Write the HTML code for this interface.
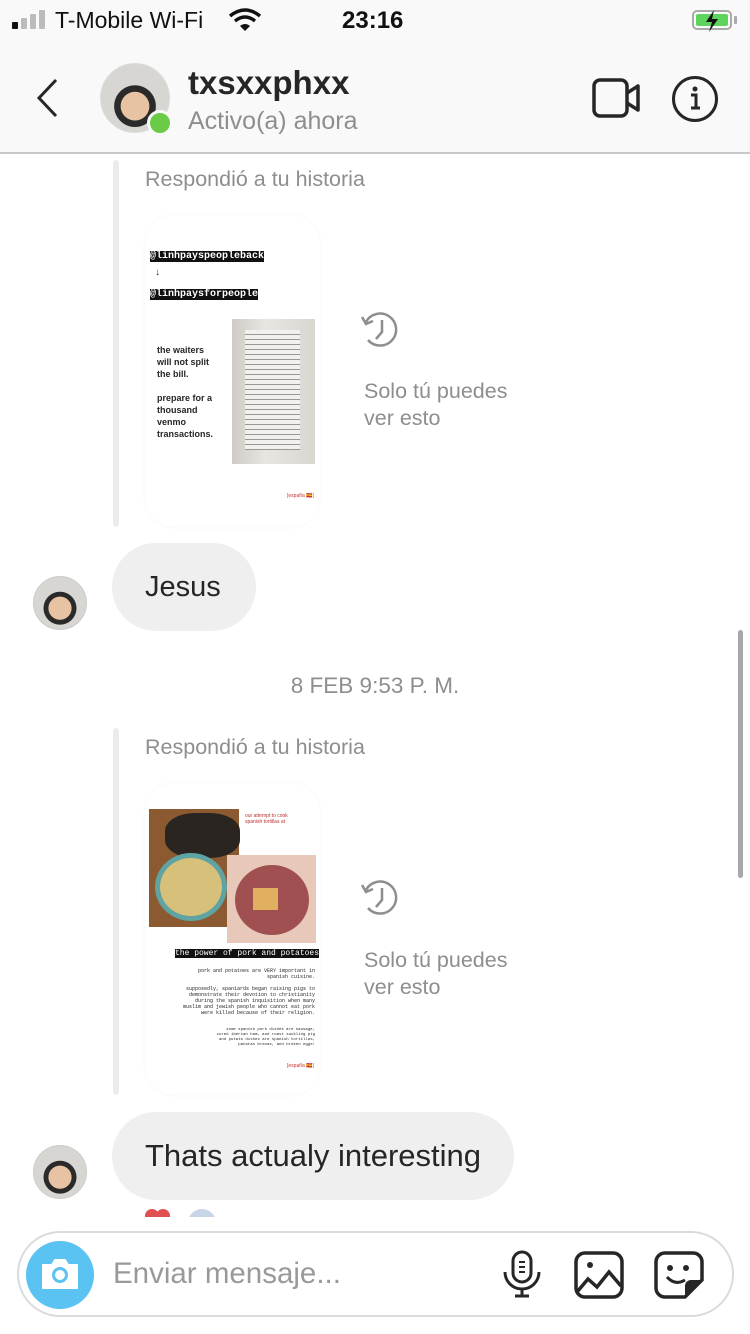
<!DOCTYPE html>
<html><head><meta charset="utf-8"><style>
*{margin:0;padding:0;box-sizing:border-box}
body{width:750px;height:1334px;position:relative;background:#fff;font-family:"Liberation Sans",sans-serif;overflow:hidden;color:#262626}
.abs{position:absolute}
.hdr{left:0;top:0;width:750px;height:154px;background:#f9f9f9;border-bottom:2px solid #c8c8c8}
.vline{width:6px;background:#ececec;border-radius:3px}
.card{background:#fff;border-radius:30px;box-shadow:0 0 4px rgba(0,0,0,0.04);overflow:hidden}
.gray{color:#8e8e8e}
.bubble{background:#efefef;border-radius:44px;height:88px;font-size:29px;line-height:88px;padding:0 33px}
.av{width:54px;height:54px;border-radius:50%;background:radial-gradient(circle at 50% 60%,#e7c2a3 0 28%,#2a2a2a 29% 40%,#d8d6d2 41%);border:1px solid #ccc}
.mono{font-family:"Liberation Mono",monospace}
</style></head><body>
<div class="abs hdr"></div>
<!-- status bar -->
<div class="abs" style="left:12px;top:22px;width:6px;height:7px;background:#111;border-radius:1px"></div>
<div class="abs" style="left:21px;top:18px;width:6px;height:11px;background:#bbb;border-radius:1px"></div>
<div class="abs" style="left:30px;top:14px;width:6px;height:15px;background:#bbb;border-radius:1px"></div>
<div class="abs" style="left:39px;top:10px;width:6px;height:19px;background:#bbb;border-radius:1px"></div>
<div class="abs" style="left:55px;top:7px;font-size:23px;color:#111">T-Mobile Wi-Fi</div>
<svg class="abs" style="left:228px;top:8px" width="34" height="24" viewBox="0 0 34 24"><path d="M2 8 Q17 -4 32 8" stroke="#111" stroke-width="3.5" fill="none"/><path d="M7 13 Q17 5 27 13" stroke="#111" stroke-width="3.5" fill="none"/><path d="M12 18 Q17 14 22 18 L17 23Z" fill="#111"/></svg>
<div class="abs" style="left:342px;top:7px;font-size:24px;font-weight:bold;color:#111">23:16</div>
<div class="abs" style="left:692px;top:10px;width:40px;height:20px;border:2px solid #aaa;border-radius:5px;padding:2px"><div style="width:100%;height:100%;background:#5fd45d;border-radius:2px"></div></div>
<div class="abs" style="left:734px;top:16px;width:3px;height:8px;background:#aaa;border-radius:1px"></div>
<svg class="abs" style="left:704px;top:10px" width="16" height="22"><path d="M10 0 L2 12 H8 L5 22 L14 9 H8Z" fill="#111"/></svg>
<!-- header -->
<svg class="abs" style="left:34px;top:78px" width="26" height="40"><path d="M22 2 L5 20 L22 38" stroke="#262626" stroke-width="3" fill="none"/></svg>
<div class="abs" style="left:100px;top:63px;width:70px;height:70px;border-radius:50%;background:radial-gradient(circle at 50% 62%,#e7c2a3 0 26%,#2a2a2a 27% 38%,#d8d6d2 39%);border:1px solid #ddd"></div>
<div class="abs" style="left:147px;top:110px;width:26px;height:26px;border-radius:50%;background:#6bcb46;border:3px solid #f9f9f9"></div>
<div class="abs" style="left:188px;top:64px;font-size:33px;font-weight:bold;color:#262626">txsxxphxx</div>
<div class="abs gray" style="left:188px;top:107px;font-size:25px">Activo(a) ahora</div>
<svg class="abs" style="left:591px;top:77px" width="52" height="42"><rect x="3" y="3" width="33" height="36" rx="6" stroke="#262626" stroke-width="3.5" fill="none"/><path d="M36 16 L47 9 V33 L36 26" stroke="#262626" stroke-width="3.5" fill="none" stroke-linejoin="round"/></svg>
<svg class="abs" style="left:671px;top:75px" width="48" height="48"><circle cx="24" cy="24" r="21.5" stroke="#262626" stroke-width="3" fill="none"/><circle cx="24" cy="14" r="2.5" fill="#262626"/><path d="M20 20 H25 V33 M20 33 H29" stroke="#262626" stroke-width="3" fill="none"/></svg>
<!-- first story -->
<div class="abs vline" style="left:113px;top:160px;height:367px"></div>
<div class="abs gray" style="left:145px;top:167px;font-size:21.5px">Respondió a tu historia</div>
<div class="abs card" style="left:145px;top:215px;width:175px;height:312px">
 <div class="abs mono" style="left:5px;top:36px;font-size:10px;background:#111;color:#fff;font-weight:bold">@linhpayspeopleback</div>
 <div class="abs" style="left:10px;top:52px;font-size:10px">↓</div>
 <div class="abs mono" style="left:5px;top:74px;font-size:10px;background:#111;color:#fff;font-weight:bold">@linhpaysforpeople</div>
 <div class="abs" style="left:12px;top:129px;font-size:9px;font-weight:bold;line-height:12px">the waiters<br>will not split<br>the bill.<br><br>prepare for a<br>thousand<br>venmo<br>transactions.</div>
 <div class="abs" style="left:87px;top:104px;width:83px;height:145px;background:linear-gradient(90deg,#cfcbc5,#e8e6e2 40%,#d9d6d0);"></div>
 <div class="abs" style="left:100px;top:115px;width:55px;height:120px;background:repeating-linear-gradient(#f1f0ee 0 4px,#9a9894 4px 5px)"></div>
 <div class="abs" style="left:142px;top:278px;font-size:5px;color:#c33">[españa 🇪🇸]</div>
</div>
<svg class="abs" style="left:360px;top:310px" width="44" height="42"><path d="M6 12 A16 16 0 1 1 8 30" stroke="#8e8e8e" stroke-width="2.5" fill="none"/><path d="M2 7 L6 14 L13 11" stroke="#8e8e8e" stroke-width="2.5" fill="none"/><path d="M22 10 V22 L16 29" stroke="#8e8e8e" stroke-width="2.5" fill="none"/></svg>
<div class="abs gray" style="left:364px;top:378px;font-size:21.5px;line-height:27px">Solo tú puedes<br>ver esto</div>
<div class="abs av" style="left:33px;top:576px"></div>
<div class="abs bubble" style="left:112px;top:543px;width:144px">Jesus</div>
<div class="abs gray" style="left:0;width:750px;top:673px;text-align:center;font-size:22.5px">8 FEB 9:53 P. M.</div>
<!-- second story -->
<div class="abs vline" style="left:113px;top:728px;height:367px"></div>
<div class="abs gray" style="left:145px;top:735px;font-size:21.5px">Respondió a tu historia</div>
<div class="abs card" style="left:145px;top:783px;width:175px;height:312px">
 <div class="abs" style="left:4px;top:26px;width:90px;height:118px;background:#8b5a30"></div>
 <div class="abs" style="left:20px;top:30px;width:75px;height:45px;border-radius:40%;background:#2a2520"></div>
 <div class="abs" style="left:10px;top:70px;width:72px;height:68px;border-radius:50%;background:#d6c07a;border:5px solid #5fa3a3"></div>
 <div class="abs" style="left:82px;top:72px;width:89px;height:88px;background:#e8c8b8"></div>
 <div class="abs" style="left:90px;top:82px;width:74px;height:70px;border-radius:50%;background:#a05050"></div>
 <div class="abs" style="left:108px;top:105px;width:25px;height:22px;background:#e0b060"></div>
 <div class="abs" style="left:100px;top:30px;font-size:5px;color:#b33;line-height:6px">our attempt to cook<br>spanish tortillas at</div>
 <div class="abs mono" style="left:30px;top:166px;font-size:8px;background:#111;color:#fff">the power of pork and potatoes</div>
 <div class="abs mono" style="left:20px;top:185px;font-size:5px;line-height:6px;text-align:right;width:150px">pork and potatoes are VERY important in<br>spanish cuisine.<br><br>supposedly, spaniards began raising pigs to<br>demonstrate their devotion to christianity<br>during the spanish inquisition when many<br>muslim and jewish people who cannot eat pork<br>were killed because of their religion.</div>
 <div class="abs mono" style="left:40px;top:245px;font-size:4px;line-height:5px;text-align:right;width:130px">some spanish pork dishes are sausage,<br>cured iberian ham, and roast suckling pig<br>and potato dishes are spanish tortillas,<br>patatas bravas, and broken eggs!</div>
 <div class="abs" style="left:142px;top:280px;font-size:5px;color:#c33">[españa 🇪🇸]</div>
</div>
<svg class="abs" style="left:360px;top:878px" width="44" height="42"><path d="M6 12 A16 16 0 1 1 8 30" stroke="#8e8e8e" stroke-width="2.5" fill="none"/><path d="M2 7 L6 14 L13 11" stroke="#8e8e8e" stroke-width="2.5" fill="none"/><path d="M22 10 V22 L16 29" stroke="#8e8e8e" stroke-width="2.5" fill="none"/></svg>
<div class="abs gray" style="left:364px;top:947px;font-size:21.5px;line-height:27px">Solo tú puedes<br>ver esto</div>
<div class="abs av" style="left:33px;top:1145px"></div>
<div class="abs bubble" style="left:112px;top:1112px;width:402px;font-size:31px">Thats actualy interesting</div>
<div class="abs" style="left:145px;top:1209px;width:34px;height:8px;overflow:hidden"><div style="width:14px;height:14px;border-radius:50%;background:#e05050;display:inline-block"></div><div style="width:14px;height:14px;border-radius:50%;background:#e05050;display:inline-block;margin-left:-3px"></div></div>
<div class="abs" style="left:188px;top:1209px;width:28px;height:8px;overflow:hidden"><div style="width:28px;height:28px;border-radius:50%;background:#c8d4e8"></div></div>
<!-- scrollbar -->
<div class="abs" style="left:738px;top:630px;width:5px;height:248px;background:#a8a8a8;border-radius:3px"></div>
<!-- input -->
<div class="abs" style="left:0;top:1218px;width:750px;height:116px;background:#fff"></div>
<div class="abs" style="left:17px;top:1231px;width:717px;height:86px;border:2px solid #dbdbdb;border-radius:43px"></div>
<div class="abs" style="left:26px;top:1241px;width:68px;height:68px;border-radius:50%;background:#5bc3f2"></div>
<svg class="abs" style="left:38px;top:1253px" width="44" height="44"><path d="M5 12 H14 L17 7 H27 L30 12 H39 V35 H5Z" fill="#fff" stroke="#fff" stroke-width="2" stroke-linejoin="round"/><circle cx="22" cy="22" r="8" fill="#5bc3f2"/><circle cx="22" cy="22" r="5" fill="#fff"/></svg>
<div class="abs" style="left:113px;top:1257px;font-size:29.5px;color:#999">Enviar mensaje...</div>
<svg class="abs" style="left:500px;top:1250px" width="44" height="50"><rect x="13" y="2" width="18" height="30" rx="9" stroke="#262626" stroke-width="3" fill="none"/><path d="M5 22 A17 17 0 0 0 39 22 M22 39 V46 M15 46 H29" stroke="#262626" stroke-width="3" fill="none"/><path d="M19 12 H25 M19 17 H25 M19 22 H25" stroke="#262626" stroke-width="2"/></svg>
<svg class="abs" style="left:573px;top:1250px" width="52" height="50"><rect x="3" y="3" width="46" height="44" rx="9" stroke="#262626" stroke-width="3.5" fill="none"/><circle cx="17" cy="15" r="3" fill="#262626"/><path d="M4 42 L15 29 L24 37 L36 22 L48 36" stroke="#262626" stroke-width="3.5" fill="none"/></svg>
<svg class="abs" style="left:653px;top:1250px" width="52" height="50"><path d="M12 3 H40 A9 9 0 0 1 49 12 V30 L32 47 H12 A9 9 0 0 1 3 38 V12 A9 9 0 0 1 12 3Z" stroke="#262626" stroke-width="3.5" fill="none"/><path d="M49 30 H38 A6 6 0 0 0 32 36 V47Z" fill="#262626"/><circle cx="17" cy="18" r="3" fill="#262626"/><circle cx="33" cy="18" r="3" fill="#262626"/><path d="M14 27 Q22 36 32 30" stroke="#262626" stroke-width="3" fill="none"/></svg>
</body></html>
